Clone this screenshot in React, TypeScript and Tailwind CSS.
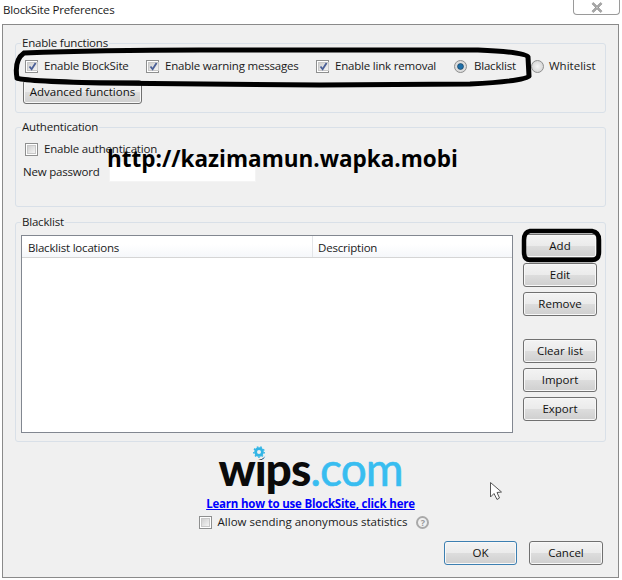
import React from "react";

function Check({ on = false }: { on?: boolean }) {
  return (
    <span className="w-[13px] h-[13px] shrink-0 border border-[#8e8f8f] bg-white p-px flex">
      <span className="flex-1 bg-gradient-to-br from-[#d0d0d0] to-[#f4f4f4] border border-[#c8c8c8] flex items-center justify-center">
        {on && (
          <svg width="9" height="9" viewBox="0 0 9 9" className="shrink-0">
            <path d="M1.5 4.5 L3.6 7.2 L7.6 1" fill="none" stroke="#4a5f97" strokeWidth="1.8" />
          </svg>
        )}
      </span>
    </span>
  );
}

function Radio({ on = false }: { on?: boolean }) {
  return (
    <svg width="13" height="13" viewBox="0 0 13 13" className="shrink-0">
      <defs>
        <radialGradient id="rb" cx="0.5" cy="0.5" r="0.6">
          <stop offset="0" stopColor="#f4f4f4" />
          <stop offset="1" stopColor="#cfcfcf" />
        </radialGradient>
      </defs>
      <circle cx="6.5" cy="6.5" r="6" fill="url(#rb)" stroke="#8e8f8f" />
      {on && <circle cx="6.5" cy="6.5" r="3" fill="#1c6ea8" stroke="#14364f" strokeWidth="0.6" />}
    </svg>
  );
}

function Btn({ children, className = "" }: { children: React.ReactNode; className?: string }) {
  return (
    <button
      className={
        "h-[24px] rounded-[3px] border border-[#707070] bg-[linear-gradient(#f3f3f3_0%,#ebebeb_48%,#dddddd_50%,#cfcfcf_100%)] text-[11.5px] leading-[20px] tracking-normal text-[#111] shadow-[inset_0_0_0_1px_#f8f8f8] " +
        className
      }
    >
      {children}
    </button>
  );
}

function Group({ title, className = "", children }: { title: string; className?: string; children: React.ReactNode }) {
  return (
    <fieldset className={"border border-[#d9e0e8] rounded-[3px] " + className}>
      <legend className="ml-[5px] px-px text-[11.5px] leading-[16px] text-[#1a1a1a]">{title}</legend>
      {children}
    </fieldset>
  );
}

export default function App() {
  return (
    <div
      className="relative w-[622px] h-[580px] bg-white overflow-hidden text-[11.5px] tracking-[-0.2px] text-[#1a1a1a]"
      style={{ fontFamily: '"Open Sans", "Noto Sans", sans-serif' }}
    >
      <div className="h-[24px] flex items-start">
        <span className="ml-[3px] mt-[2px] leading-[16px]">BlockSite Preferences</span>
        <span className="ml-auto mr-[2px] w-[47px] h-[15px] border border-t-0 border-[#9a9a9a] rounded-b-[4px] flex items-center justify-center">
          <svg width="12" height="11" viewBox="0 0 12 11">
            <path d="M1.5 1 L10.5 10 M10.5 1 L1.5 10" stroke="#777" strokeWidth="2.4" />
            <path d="M1.5 1 L10.5 10 M10.5 1 L1.5 10" stroke="#eee" strokeWidth="0.8" />
          </svg>
        </span>
      </div>

      <div className="ml-[2px] w-[617px] h-[554px] border border-[#8a8a8a] bg-[#f0f0f0] px-[12px]">
        <Group title="Enable functions" className="mt-[10px] h-[78px]">
          <div className="ml-[9px] mt-[7px] flex items-center h-[16px]">
            <span className="w-[121px] flex items-center gap-[6px]"><Check on />Enable BlockSite</span>
            <span className="w-[170px] flex items-center gap-[6px]"><Check on />Enable warning messages</span>
            <span className="w-[138px] flex items-center gap-[6px]"><Check on />Enable link removal</span>
            <span className="w-[77px] flex items-center gap-[7px]"><Radio on />Blacklist</span>
            <span className="flex items-center gap-[5px] tracking-normal"><Radio />Whitelist</span>
          </div>
          <Btn className="mt-[6px] ml-[7px] w-[119px] h-[23px]">Advanced functions</Btn>
        </Group>

        <Group title="Authentication" className="mt-[6px] h-[88px]">
          <div className="ml-[9px] mt-[6px] flex items-center h-[16px] gap-[6px]"><Check />Enable authentication</div>
          <div className="ml-[7px] mt-[4px] flex items-center h-[21px]">
            <span className="w-[86px]">New password</span>
            <span className="w-[147px] h-[21px] bg-white border border-[#f4f4f4]" />
          </div>
        </Group>

        <Group title="Blacklist" className="mt-[7px] h-[228px]">
          <div className="ml-[5px] mt-[5px] flex">
            <div className="w-[492px] h-[198px] border border-[#828790] bg-white">
              <div className="h-[22px] flex items-center border-b border-[#d5d5d5] bg-gradient-to-b from-white from-40% to-[#f5f7fa]">
                <span className="w-[291px] pl-[6px] h-full leading-[24px] border-r border-[#e3e5e8]">Blacklist locations</span>
                <span className="pl-[5px] pt-[2px]">Description</span>
              </div>
            </div>
            <div className="ml-[10px] w-[74px] flex flex-col gap-[5px] -mt-[1px]">
              <Btn>Add</Btn>
              <Btn>Edit</Btn>
              <Btn>Remove</Btn>
              <Btn className="mt-[18px]">Clear list</Btn>
              <Btn>Import</Btn>
              <Btn>Export</Btn>
            </div>
          </div>
        </Group>

        <div className="flex flex-col items-center">
          <div className="h-[52px] flex flex-col items-center relative">
            <div className="mt-[1px] text-[46px] leading-[52px] tracking-[-1px] whitespace-nowrap" style={{ fontFamily: "Lato, sans-serif" }}>
              <span className="font-black text-[#0b0b0b]">wips</span>
              <span className="text-[#38bdf0] font-normal [-webkit-text-stroke:0.6px_#38bdf0]">.com</span>
            </div>
            <svg width="16" height="16" viewBox="0 0 16 16" className="absolute left-[33px] top-[2px]">
              <circle cx="8" cy="8" r="7.5" fill="#f0f0f0" />
              <circle cx="8" cy="8" r="3.4" fill="none" stroke="#33b5e5" strokeWidth="2.8" />
              <circle cx="8" cy="8" r="5.2" fill="none" stroke="#33b5e5" strokeWidth="1.4" strokeDasharray="1.6 2" />
            </svg>
          </div>
          <a className="mt-[2px] font-bold text-[#0000ff] underline leading-[16px]" href="#">Learn how to use BlockSite, click here</a>
          <div className="mt-[2px] pl-[7px] flex items-center gap-[6px] h-[16px] tracking-normal">
            <Check />
            <span>Allow sending anonymous statistics</span>
            <span className="ml-[3px] w-[13px] h-[13px] rounded-full border-2 border-[#a9a9a9] text-[#999] text-[9px] leading-[9px] font-bold flex items-center justify-center">?</span>
          </div>
          <div className="self-end mt-[11px] mr-[3px] flex gap-[12px]">
            <Btn className="w-[73px] !border-[#3c7fb1] shadow-[inset_0_0_0_1px_#5fd0f0]">OK</Btn>
            <Btn className="w-[74px]">Cancel</Btn>
          </div>
        </div>
      </div>

      {/* hand-drawn annotations lying over the dialog */}
      <svg width="622" height="580" viewBox="0 0 622 580" className="absolute inset-0 pointer-events-none">
        <path
          d="M24 53 Q100 50 200 50 L478 50 Q526 52 528 57 L529 76 Q527 81 470 84 L320 85 L100 83 Q22 81 17 78 Q14 60 24 53 Z"
          fill="none"
          stroke="#000"
          strokeWidth="5"
        />
        <path
          d="M530 231 L592 231 Q599 232 599 240 L599 252 Q599 260 592 260 L530 260 Q524 260 524 252 L524 240 Q524 232 530 231 Z"
          fill="none"
          stroke="#000"
          strokeWidth="4.5"
        />
        <path
          d="M490.5 482.5 L490.5 497 L494 493.5 L497 499.5 L499.5 498 L497 492.5 L501.5 492 Z"
          fill="#fff"
          stroke="#555"
          strokeWidth="1"
        />
      </svg>
      <div className="absolute left-[107px] top-[143px] text-[22.5px] leading-[32px] tracking-normal font-bold text-black whitespace-nowrap">
        http://kazimamun.wapka.mobi
      </div>
    </div>
  );
}
